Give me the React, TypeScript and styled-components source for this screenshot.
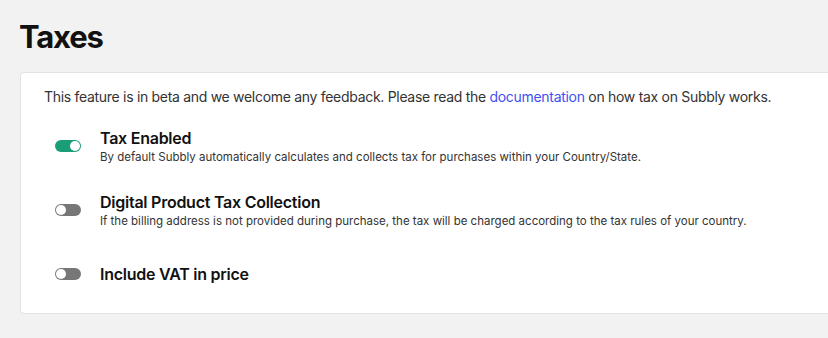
import React, { FC } from "react";
import styled, { createGlobalStyle } from "styled-components";

const GlobalStyle = createGlobalStyle`
  html, body {
    margin: 0;
    padding: 0;
    background: #f2f2f2;
    font-family: Inter, "Noto Sans", sans-serif;
    color: #111;
  }
  * { box-sizing: border-box; }
`;

interface Setting {
  title: string;
  description?: string;
  enabled: boolean;
}

const settings: Setting[] = [
  {
    title: "Tax Enabled",
    description:
      "By default Subbly automatically calculates and collects tax for purchases within your Country/State.",
    enabled: true,
  },
  {
    title: "Digital Product Tax Collection",
    description:
      "If the billing address is not provided during purchase, the tax will be charged according to the tax rules of your country.",
    enabled: false,
  },
  {
    title: "Include VAT in price",
    enabled: false,
  },
];

const Toggle: FC<{ on: boolean }> = ({ on }) => (
  <Track on={on}>
    <Knob on={on} />
  </Track>
);

const App: FC = () => (
  <>
    <GlobalStyle />
    <Page>
      <Title>Taxes</Title>
      <Card>
        <Intro>
          This feature is in beta and we welcome any feedback. Please read the{" "}
          <Link href="#">documentation</Link> on how tax on Subbly works.
        </Intro>
        <List>
          {settings.map((s, i) => (
            <Row key={i}>
              <Toggle on={s.enabled} />
              <Text>
                <Label>{s.title}</Label>
                {s.description && <Hint>{s.description}</Hint>}
              </Text>
            </Row>
          ))}
        </List>
      </Card>
    </Page>
  </>
);

const Page = styled.div`
  padding: 20px 0 0 20px;
  width: 828px;
  height: 338px;
  overflow: hidden;
`;

const Title = styled.h1`
  margin: 0 0 18px -1px;
  font-size: 31px;
  line-height: 34px;
  font-weight: 700;
  letter-spacing: -1.2px;
  color: #111;
`;

const Card = styled.div`
  background: #fff;
  border: 1px solid #e2e2e2;
  border-right: none;
  border-radius: 4px 0 0 4px;
  padding: 15px 0 8px 23px;
  height: 242px;
`;

const Intro = styled.p`
  margin: 0;
  font-size: 14px;
  line-height: 18px;
  letter-spacing: -0.3px;
  color: #333;
`;

const Link = styled.a`
  color: #3f51f2;
  text-decoration: none;
`;

const List = styled.div`
  display: flex;
  flex-direction: column;
  margin-top: 8px;
`;

const Row = styled.div`
  display: flex;
  align-items: center;
  gap: 19px;
  height: 64px;
  padding-left: 11px;
`;

const Track = styled.div<{ on: boolean }>`
  flex: none;
  width: 26px;
  height: 12px;
  border-radius: 6px;
  background: ${(p) => (p.on ? "#1a9e78" : "#777777")};
  position: relative;
`;

const Knob = styled.div<{ on: boolean }>`
  position: absolute;
  top: 1px;
  left: ${(p) => (p.on ? "15px" : "1px")};
  width: 10px;
  height: 10px;
  border-radius: 50%;
  background: #fff;
`;

const Text = styled.div`
  display: flex;
  flex-direction: column;
`;

const Label = styled.div`
  font-size: 16px;
  line-height: 20px;
  font-weight: 600;
  letter-spacing: -0.25px;
  color: #111;
`;

const Hint = styled.div`
  font-size: 11.5px;
  line-height: 15px;
  color: #333;
  margin-top: 2px;
`;

export default App;
